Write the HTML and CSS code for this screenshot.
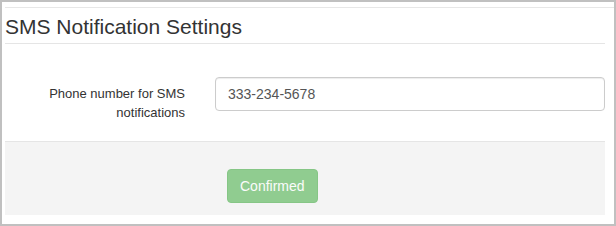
FILE: index.html
```html
<!DOCTYPE html>
<html>
<head>
<meta charset="utf-8">
<link rel="stylesheet" href="styles.css">
</head>
<body>
<div class="frame">
  <div class="panel">
    <div class="content">
      <h3 class="title">SMS Notification Settings</h3>
      <div class="form-body">
        <div class="form-row">
          <label class="form-label" for="phone">Phone number for SMS notifications</label>
          <div class="form-field">
            <input id="phone" class="form-input" type="text" value="333-234-5678">
          </div>
        </div>
      </div>
      <div class="form-footer">
        <button class="btn-success" type="button" disabled>Confirmed</button>
      </div>
    </div>
  </div>
</div>
</body>
</html>
```
FILE: styles.css
```css
* { box-sizing: border-box; }
html, body {
  margin: 0;
  padding: 0;
  background: #ffffff;
}
body {
  font-family: "Liberation Sans", Arial, sans-serif;
  color: #333333;
}
.frame {
  width: 616px;
  height: 226px;
  border: 2px solid #c0c0c0;
  padding: 5px 0 9px 3px;
  background: #ffffff;
}
.panel {
  border-top: 1px solid #e7e7e7;
}
.content {
  margin-right: 9px;
}
.title {
  margin: 0;
  padding: 7px 0 5px 0;
  font-size: 21px;
  line-height: 23px;
  font-weight: normal;
  color: #333333;
  border-bottom: 1px solid #e5e5e5;
}
.form-body {
  padding: 33px 0 19px 0;
}
.form-row {
  display: grid;
  grid-template-columns: 180px 1fr;
  column-gap: 30px;
}
.form-label {
  padding-top: 7px;
  text-align: right;
  font-size: 13px;
  line-height: 19px;
  color: #333333;
}
.form-input {
  display: block;
  width: 100%;
  height: 34px;
  padding: 6px 12px;
  font-family: "Liberation Sans", Arial, sans-serif;
  font-size: 14px;
  line-height: 20px;
  color: #555555;
  background: #ffffff;
  border: 1px solid #cccccc;
  border-radius: 4px;
  box-shadow: inset 0 1px 1px rgba(0,0,0,0.075);
  outline: none;
}
.form-footer {
  border-top: 1px solid #e5e5e5;
  background: #f4f4f4;
  height: 74px;
  padding: 27px 0 0 222px;
}
.btn-success {
  display: block;
  height: 34px;
  padding: 6px 12px;
  font-family: "Liberation Sans", Arial, sans-serif;
  font-size: 14px;
  line-height: 20px;
  color: #ffffff;
  background: #5cb85c;
  border: 1px solid #4cae4c;
  border-radius: 4px;
  opacity: 0.65;
  cursor: not-allowed;
}
```
